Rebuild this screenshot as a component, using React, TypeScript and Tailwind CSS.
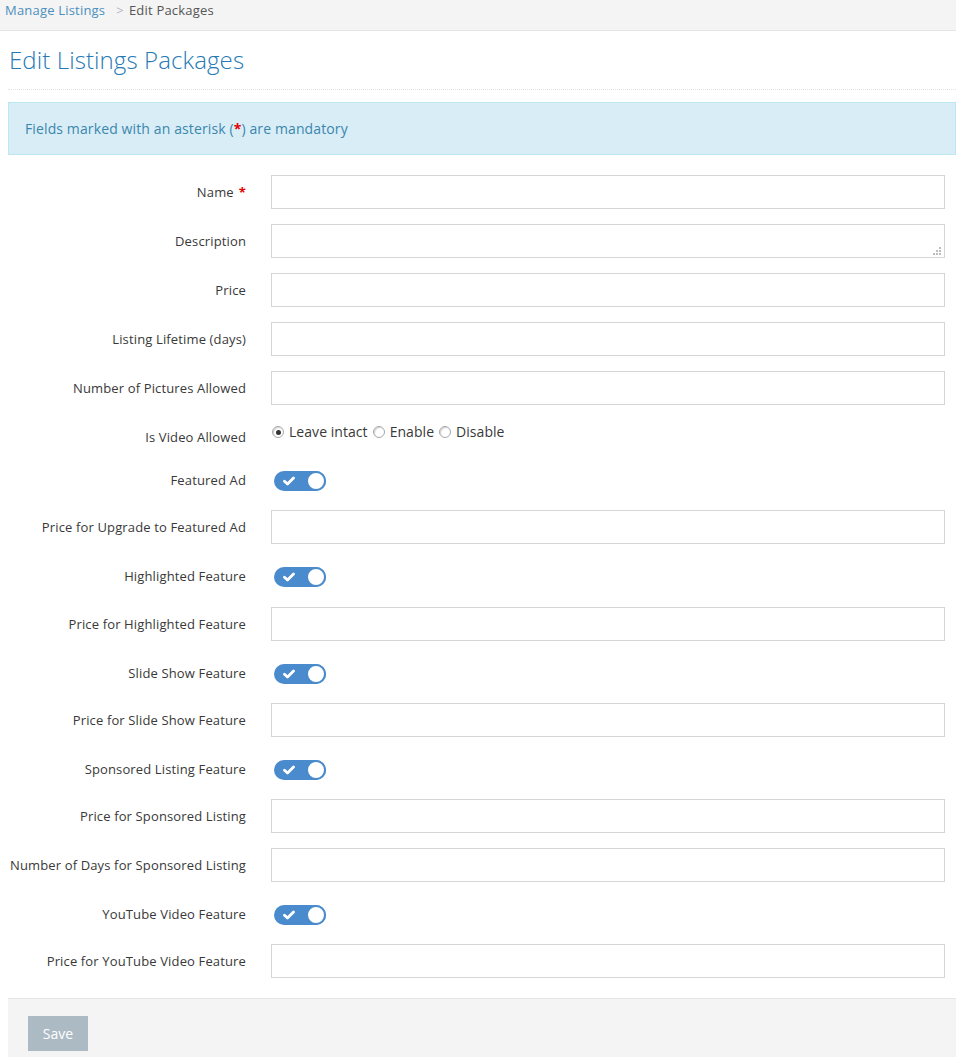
import React from "react";

type Row =
  | { kind: "input"; label: string; required?: boolean; textarea?: boolean }
  | { kind: "radio"; label: string }
  | { kind: "toggle"; label: string };

const ROWS: Row[] = [
  { kind: "input", label: "Name", required: true },
  { kind: "input", label: "Description", textarea: true },
  { kind: "input", label: "Price" },
  { kind: "input", label: "Listing Lifetime (days)" },
  { kind: "input", label: "Number of Pictures Allowed" },
  { kind: "radio", label: "Is Video Allowed" },
  { kind: "toggle", label: "Featured Ad" },
  { kind: "input", label: "Price for Upgrade to Featured Ad" },
  { kind: "toggle", label: "Highlighted Feature" },
  { kind: "input", label: "Price for Highlighted Feature" },
  { kind: "toggle", label: "Slide Show Feature" },
  { kind: "input", label: "Price for Slide Show Feature" },
  { kind: "toggle", label: "Sponsored Listing Feature" },
  { kind: "input", label: "Price for Sponsored Listing" },
  { kind: "input", label: "Number of Days for Sponsored Listing" },
  { kind: "toggle", label: "YouTube Video Feature" },
  { kind: "input", label: "Price for YouTube Video Feature" },
];

function Toggle() {
  return (
    <div className="mt-[8px] flex h-[20px] w-[52px] items-center justify-between rounded-full bg-[#4a8bcd] pl-[9px]">
      <svg width="12" height="10" viewBox="0 0 12 10">
        <path d="M1.5 5.2 L4.5 8 L10.5 2" fill="none" stroke="#fff" strokeWidth="2.8" strokeLinecap="round" strokeLinejoin="round" />
      </svg>
      <div className="h-[20px] w-[20px] rounded-full border-[2px] border-[#4a8bcd] bg-white" />
    </div>
  );
}

function Radio({ checked, label }: { checked?: boolean; label: string }) {
  return (
    <label className="flex items-center gap-[5px]">
      <span className="flex h-[12px] w-[12px] items-center justify-center rounded-full border border-[#a8a8a8] bg-white shadow-[inset_1px_1px_1px_rgba(0,0,0,0.18)]">
        {checked && <span className="h-[5px] w-[5px] rounded-full bg-[#333]" />}
      </span>
      <span>{label}</span>
    </label>
  );
}

function ResizeDots() {
  return (
    <svg className="absolute bottom-[2px] right-[3px]" width="10" height="10" viewBox="0 0 10 10">
      {[
        [7, 1], [4, 4], [7, 4], [1, 7], [4, 7], [7, 7],
      ].map(([x, y]) => (
        <rect key={`${x}-${y}`} x={x} y={y} width="2" height="2" fill="#bdbdbd" />
      ))}
    </svg>
  );
}

const labelCls = "w-[238px] shrink-0 pt-[8px] text-right text-[13px] leading-[18px] tracking-[0.14px] text-[#393939]";

function FormRow({ row }: { row: Row }) {
  const label = (
    <div className={labelCls}>
      {row.label}
      {row.kind === "input" && row.required && <span className="ml-[5px] font-bold text-[#e30000]">*</span>}
    </div>
  );

  if (row.kind === "radio") {
    return (
      <div className="mb-[15px] flex h-[28px] items-start">
        {label}
        <div className="ml-[26px] flex gap-[5px] text-[14px] leading-[24px] tracking-[0.05px] text-[#393939]">
          <Radio checked label="Leave intact" />
          <Radio label="Enable" />
          <Radio label="Disable" />
        </div>
      </div>
    );
  }

  if (row.kind === "toggle") {
    return (
      <div className="mb-[15px] flex h-[32.25px] items-start">
        {label}
        <div className="ml-[28px]">
          <Toggle />
        </div>
      </div>
    );
  }

  return (
    <div className="mb-[15px] flex items-start">
      {label}
      <div className="relative ml-[25px] mr-[11px] flex-1">
        <div className="h-[34px] border border-[#d5d5d5] bg-white" />
        {row.textarea && <ResizeDots />}
      </div>
    </div>
  );
}

export default function App() {
  return (
    <div className="flex min-h-[1057px] flex-col bg-white font-['Open_Sans',sans-serif]">
      <div className="flex h-[31px] items-start border-b border-[#e5e5e5] bg-[#f4f4f4] pl-[5px] text-[13px] leading-[20px] tracking-[0.2px]">
        <span className="text-[#4c8fbd]">Manage Listings</span>
        <span className="ml-[11px] mr-[5px] text-[#b2b6bf]">&gt;</span>
        <span className="text-[#555]">Edit Packages</span>
      </div>

      <div className="flex flex-1 flex-col pl-[8px]">
        <div className="border-b border-dotted border-[#e2e2e2] pb-[13px] pl-[1px] pt-[13px]">
          <h1 className="text-[24px] font-light leading-[32px] tracking-[0.1px] text-[#2679b5]">Edit Listings Packages</h1>
        </div>

        <div className="mt-[12px] mb-[20px] border border-[#bce8f1] bg-[#d9edf7] px-[16px] py-[15px] text-[14px] leading-[21px] tracking-[0.12px] text-[#3a87ad]">
          Fields marked with an asterisk (<span className="font-bold text-[#e30000]">*</span>) are mandatory
        </div>

        <div>
          {ROWS.map((row) => (
            <FormRow key={row.label} row={row} />
          ))}
        </div>

        <div className="mt-[5px] flex-1 border-t border-[#e5e5e5] bg-[#f4f4f4] pb-[6px] pl-[20px] pt-[17px]">
          <button className="h-[35px] w-[60px] bg-[#abbac3] text-[14px] text-white">Save</button>
        </div>
      </div>
    </div>
  );
}
